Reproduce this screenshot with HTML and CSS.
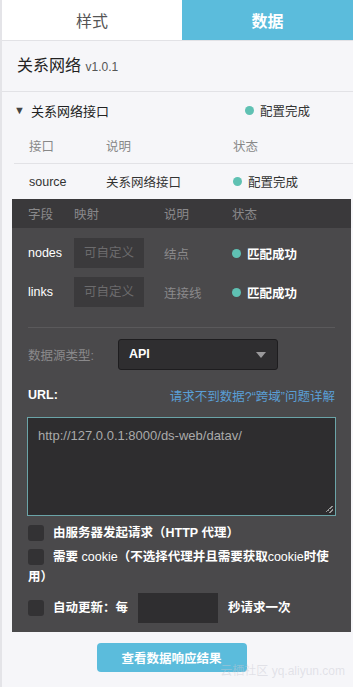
FILE: index.html
```html
<!DOCTYPE html>
<html lang="zh-CN">
<head>
  <meta charset="UTF-8" />
  <meta name="viewport" content="width=device-width, initial-scale=1.0"/>
  <title>关系网络 - 数据</title>
  <link rel="stylesheet" href="styles.css">
</head>
<body>
<div class="page">

  <div class="tabs">
    <div class="tab">样式</div>
    <div class="tab active">数据</div>
  </div>

  <div class="title">关系网络 <span class="version">v1.0.1</span></div>

  <div class="section-head">
    <span class="caret">▼</span>
    <span class="section-name">关系网络接口</span>
    <span class="status"><i class="dot"></i>配置完成</span>
  </div>

  <div class="api-table">
    <div class="api-row api-head">
      <span>接口</span><span>说明</span><span>状态</span>
    </div>
    <div class="api-row">
      <span>source</span><span>关系网络接口</span><span class="status"><i class="dot"></i>配置完成</span>
    </div>
  </div>

  <div class="panel">
    <div class="field-row field-head">
      <span>字段</span><span>映射</span><span>说明</span><span>状态</span>
    </div>
    <div class="fields">
      <div class="field-row">
        <span class="fname">nodes</span>
        <input class="map-input" type="text" placeholder="可自定义" />
        <span class="fdesc">结点</span>
        <span class="match"><i class="dot"></i>匹配成功</span>
      </div>
      <div class="field-row">
        <span class="fname">links</span>
        <input class="map-input" type="text" placeholder="可自定义" />
        <span class="fdesc">连接线</span>
        <span class="match"><i class="dot"></i>匹配成功</span>
      </div>
    </div>

    <div class="sep"></div>

    <div class="source-row">
      <span class="label">数据源类型:</span>
      <div class="select">API<span class="arrow"></span></div>
    </div>

    <div class="url-row">
      <span class="url-label">URL:</span>
      <a class="help">请求不到数据?“跨域”问题详解</a>
    </div>
    <div class="url-box">http://127.0.0.1:8000/ds-web/datav/<span class="grip"></span></div>

    <div class="check-row first"><i class="box"></i>由服务器发起请求（HTTP 代理）</div>
    <div class="check-row wrap"><i class="box"></i>需要 <span class="plain">cookie</span>（不选择代理并且需要获取<span class="plain">cookie</span>时使用）</div>
    <div class="check-row auto"><i class="box"></i>自动更新：每 <span class="sec-input"></span> 秒请求一次</div>
  </div>

  <div class="footer">
    <button class="view-btn">查看数据响应结果</button>
    <span class="watermark">云栖社区 yq.aliyun.com</span>
  </div>

</div>
</body>
</html>
```

FILE: styles.css
```css
body {
  margin: 0;
  background: #f6f6f9;
  font-family: "Liberation Sans", "Noto Sans CJK SC", sans-serif;
  font-size: 12.5px;
  color: #333;
}
.page {
  width: 351px;
  height: 687px;
  border-left: 2px solid #e4e4e8;
  background: #f6f6f9;
  overflow: hidden;
}
.tabs {
  display: flex;
  height: 40px;
  border-bottom: 1px solid #e2e2e6;
}
.tab {
  width: 180px;
  background: #fff;
  color: #555;
  font-size: 16px;
  display: flex;
  align-items: center;
  justify-content: center;
}
.tab.active {
  flex: 1;
  background: #5bbcdc;
  color: #fff;
  font-weight: bold;
}
.title {
  height: 50px;
  line-height: 50px;
  padding-left: 15px;
  font-size: 16px;
  color: #222;
  border-bottom: 1px solid #e2e2e6;
}
.version {
  font-size: 12px;
  color: #555;
}
.section-head {
  display: flex;
  align-items: center;
  height: 36px;
  padding-left: 12px;
  font-size: 13px;
  color: #222;
}
.caret {
  font-size: 11px;
  margin-right: 6px;
  color: #444;
}
.section-head .section-name {
  width: 214px;
}
.status {
  display: flex;
  align-items: center;
  font-size: 12.5px;
  color: #333;
}
.dot {
  display: inline-block;
  width: 9px;
  height: 9px;
  border-radius: 50%;
  background: #5fc1b3;
  margin-right: 6px;
}
.api-table {
  margin-left: 12px;
}
.api-row {
  display: grid;
  grid-template-columns: 77px 127px 1fr;
  align-items: center;
  height: 35px;
  padding-left: 15px;
}
.api-head {
  color: #888;
  border-bottom: 1px solid #e2e2e6;
}
.panel {
  margin-left: 10px;
  width: 339px;
  background: #4a494b;
  padding-bottom: 9px;
}
.field-row {
  display: grid;
  grid-template-columns: 46px 90px 68px 1fr;
  align-items: center;
  padding-left: 16px;
}
.field-head {
  height: 29px;
  background: #3a393b;
  color: #8a898b;
}
.fields {
  display: flex;
  flex-direction: column;
  gap: 9px;
  padding-top: 10px;
  padding-bottom: 20px;
}
.fname {
  color: #fff;
}
.map-input {
  width: 70px;
  height: 30px;
  box-sizing: border-box;
  border: none;
  background: #3b3a3c;
  color: #ddd;
  padding: 0 10px;
  font-family: inherit;
  font-size: 12.5px;
}
.map-input::placeholder {
  color: #6c6b6d;
}
.fdesc {
  color: #8a898b;
}
.match {
  display: flex;
  align-items: center;
  color: #fff;
  font-weight: bold;
}
.sep {
  height: 1px;
  background: #5a595b;
  margin: 0 16px 0 16px;
}
.source-row {
  display: flex;
  align-items: center;
  padding: 11px 0 0 16px;
}
.label {
  width: 90px;
  color: #8a898b;
}
.select {
  position: relative;
  width: 160px;
  height: 31px;
  box-sizing: border-box;
  border: 1px solid #1e1d1f;
  border-radius: 3px;
  background: #2f2e30;
  color: #fff;
  font-weight: bold;
  line-height: 29px;
  padding-left: 10px;
}
.arrow {
  position: absolute;
  right: 11px;
  top: 12px;
  border-left: 5px solid transparent;
  border-right: 5px solid transparent;
  border-top: 6px solid #9a999b;
}
.url-row {
  display: flex;
  justify-content: space-between;
  align-items: center;
  padding: 15px 16px 0 16px;
  height: 20px;
}
.url-label {
  color: #fff;
  font-weight: bold;
}
.help {
  color: #5a9fd6;
  font-size: 12.5px;
}
.url-box {
  position: relative;
  margin: 12px 15px 0 15px;
  height: 99px;
  box-sizing: border-box;
  border: 1px solid #6ba4a8;
  background: #2e2d2f;
  color: #aaa;
  padding: 10px 10px;
  font-size: 13px;
}
.grip {
  position: absolute;
  right: 2px;
  bottom: 2px;
  width: 7px;
  height: 7px;
  background: linear-gradient(135deg, transparent 40%, #999 40%, #999 50%, transparent 50%, transparent 70%, #999 70%, #999 80%, transparent 80%);
}
.check-row {
  display: flex;
  align-items: center;
  padding: 6px 4px 0 16px;
  color: #fff;
  font-weight: bold;
  line-height: 20px;
}
.check-row.first {
  padding-top: 7px;
}
.check-row.wrap {
  display: block;
  padding-top: 4px;
}
.check-row.wrap .box {
  vertical-align: -4px;
}
.plain {
  font-weight: normal;
}
.check-row.auto {
  padding-top: 6px;
}
.box {
  display: inline-block;
  width: 16px;
  height: 16px;
  border-radius: 3px;
  background: #333234;
  margin-right: 9px;
}
.sec-input {
  display: inline-block;
  width: 80px;
  height: 30px;
  background: #2f2e30;
  margin: 0 10px;
}
.footer {
  position: relative;
  display: flex;
  justify-content: center;
  padding-top: 11px;
  margin-left: -12px;
}
.view-btn {
  width: 150px;
  height: 29px;
  border: none;
  border-radius: 4px;
  background: #5bbcdc;
  color: #fff;
  font-family: inherit;
  font-size: 12.5px;
  font-weight: bold;
}
.watermark {
  position: absolute;
  right: 8px;
  top: 29px;
  color: rgba(200, 200, 210, 0.45);
  font-size: 12px;
}
```
